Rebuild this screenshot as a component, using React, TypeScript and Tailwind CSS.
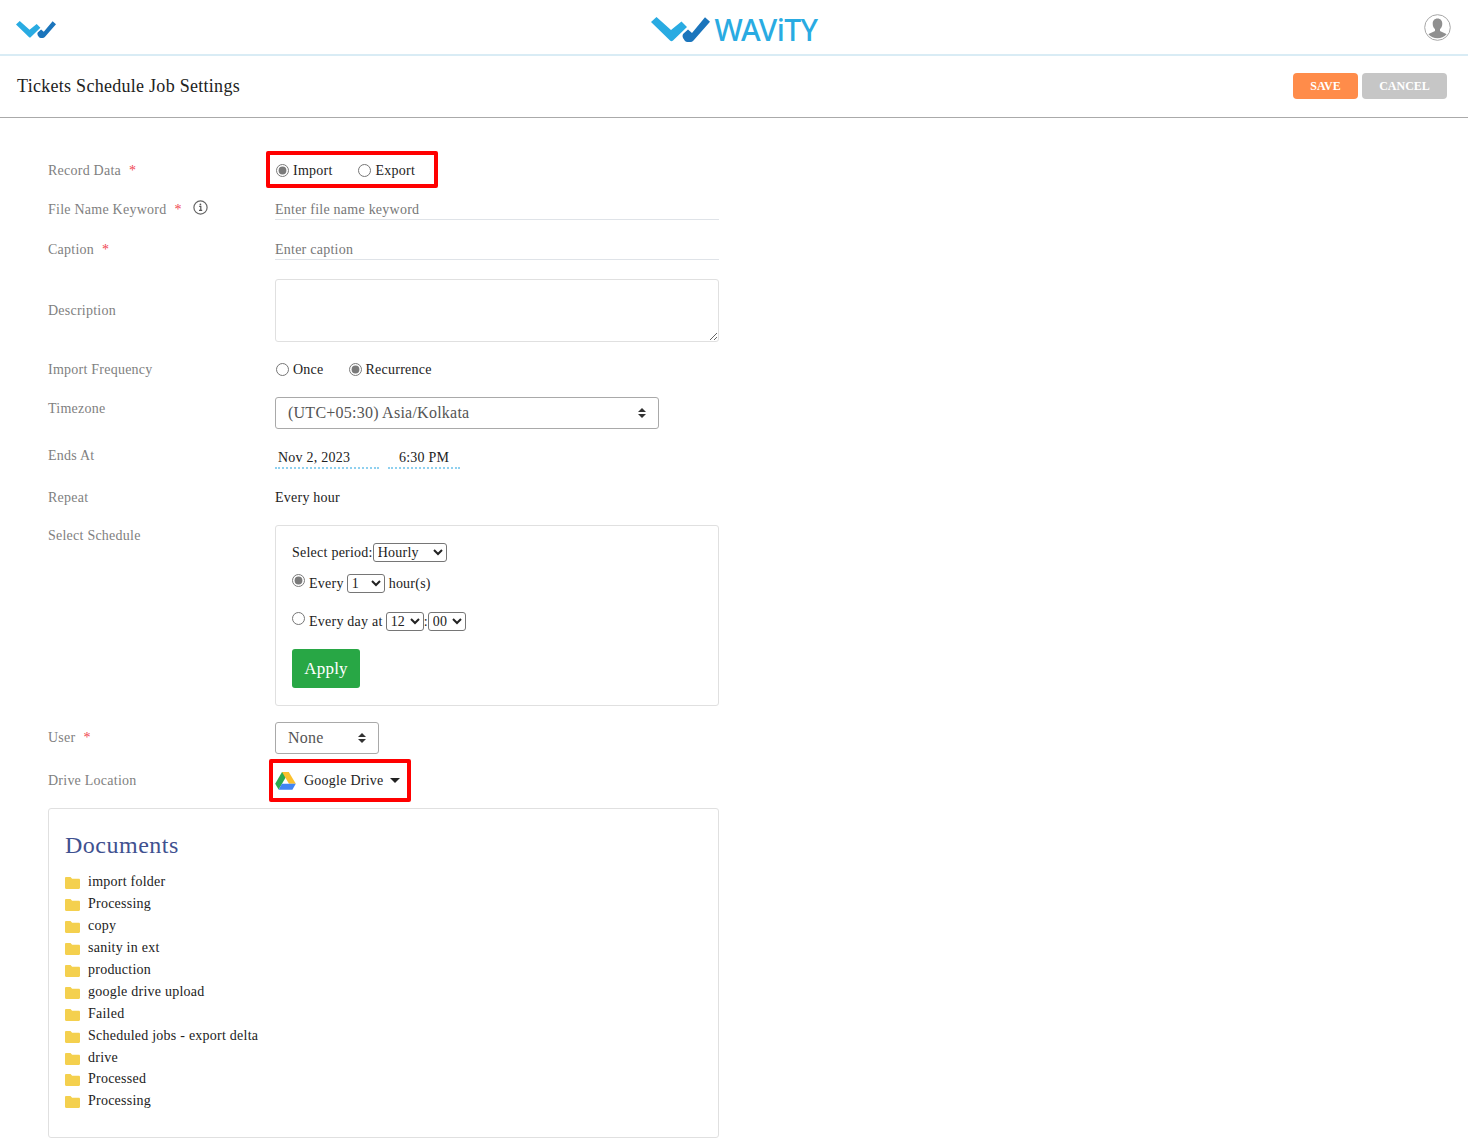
import React from 'react';

const serif = { fontFamily: '"Liberation Serif", serif' };

const LogoMark = ({ className }: { className: string }) => (
  <svg className={className} viewBox="0 0 59 25">
    <path d="M0 5 L5.5 0 L20 13 L30.5 4.5 L36 10 L22 23.5 Q20.5 25 19 23.5 Z" fill="#29abe2" />
    <path d="M32 17 L37 12.5 L41 16 L54 0.3 L59 4.7 L42.5 23.5 Q41 25 39.5 25 L36.5 25 Q35 25 34 24 L32 21 Q31 19 32 17 Z" fill="#1b75bc" />
  </svg>
);

const UserAvatar = () => (
  <svg className="h-[27px] w-[27px]" viewBox="0 0 27 27">
    <circle cx="13.5" cy="13.5" r="12.8" fill="#fff" stroke="#a6a6a6" strokeWidth="1" />
    <path d="M13.5 4.5c3 0 4.8 2.2 4.8 5.2 0 2.4-1 4.4-2.3 5.4v1.6c0 .8 4.8 1.8 6.6 3.6a12.6 12.6 0 0 1-18.2 0c1.8-1.8 6.6-2.8 6.6-3.6v-1.6c-1.3-1-2.3-3-2.3-5.4 0-3 1.8-5.2 4.8-5.2z" fill="#8f8f8f" />
  </svg>
);

const InfoIcon = () => (
  <svg className="h-[15px] w-[15px]" viewBox="0 0 15 15" fill="none">
    <circle cx="7.5" cy="7.5" r="6.6" stroke="#666" strokeWidth="1.2" />
    <path d="M6.2 6.4h1.6v3.7M6 10.4h3.2" stroke="#555" strokeWidth="1.2" />
    <circle cx="7.4" cy="4.3" r="0.9" fill="#555" />
  </svg>
);

const UpDown = () => (
  <svg className="pointer-events-none absolute right-[13px] top-1/2 h-[10px] w-[8px] -translate-y-1/2" viewBox="0 0 8 10" fill="#333">
    <path d="M4 0 L8 4 H0 Z M0 6 H8 L4 10 Z" />
  </svg>
);

const DriveIcon = () => (
  <svg className="h-[18px] w-[21px] shrink-0" viewBox="0 0 21 18">
    <path d="M7 0 H13.8 L7 11.8 L3.6 17.6 L0.2 11.8 Z" fill="#2da94f" />
    <path d="M7 0 H13.8 L20.8 11.8 H14 Z" fill="#fbc02d" />
    <path d="M6.9 11.8 H20.8 L17.4 17.8 H3.5 Z" fill="#4285f4" />
  </svg>
);

const Folder = () => (
  <svg className="h-[12px] w-[15px] shrink-0" viewBox="0 0 15 12" fill="#f4d04e">
    <path d="M1.2 0h4.3l1.6 1.8h6.7c.7 0 1.2.5 1.2 1.2v7.8c0 .7-.5 1.2-1.2 1.2H1.2C.5 12 0 11.5 0 10.8V1.2C0 .5.5 0 1.2 0z" />
  </svg>
);

const Star = () => <span className="ml-[8px] text-[#f0444f]">*</span>;

const Label = ({ children }: { children: React.ReactNode }) => (
  <div className="w-[227px] shrink-0 text-[14px] text-[#7f7f7f]">{children}</div>
);

const Radio = ({ name, checked }: { name: string; checked?: boolean }) => (
  <input type="radio" name={name} defaultChecked={checked} className="m-0 block h-[13px] w-[13px] accent-[#7a7a7a]" />
);

const folders = [
  'import folder',
  'Processing',
  'copy',
  'sanity in ext',
  'production',
  'google drive upload',
  'Failed',
  'Scheduled jobs - export delta',
  'drive',
  'Processed',
  'Processing',
];

export default function App() {
  return (
    <div className="h-[1138px] overflow-hidden bg-white tracking-[0.24px] text-[#333]" style={serif}>
      {/* Top bar */}
      <header className="flex h-[56px] items-center justify-between border-b-2 border-[#d9ecf5] pl-[16px] pr-[17px]">
        <LogoMark className="mt-[5px] h-[17px] w-[40px]" />
        <div className="-ml-[12px] mt-[5px] flex items-center gap-[5px]">
          <LogoMark className="h-[25px] w-[59px]" />
          <span className="text-[30px] font-medium leading-none tracking-[-0.6px] text-[#29abe2]" style={{ fontFamily: '"Noto Sans", sans-serif' }}>WAViTY</span>
        </div>
        <UserAvatar />
      </header>

      {/* Page title */}
      <div className="flex h-[62px] items-center justify-between border-b border-[#aaaaaa] pl-[17px] pr-[21px]">
        <h1 className="text-[18px] font-normal tracking-[0.28px] text-[#222]">Tickets Schedule Job Settings</h1>
        <div className="mb-[2px] flex gap-[4px] tracking-normal">
          <button className="h-[26px] w-[65px] rounded-[4px] bg-[#ff8c4a] text-[12px] font-bold text-white">SAVE</button>
          <button className="h-[26px] w-[85px] rounded-[4px] bg-[#c6c6c6] text-[12px] font-bold text-white">CANCEL</button>
        </div>
      </div>

      <div className="pl-[48px] pt-[33px]">
        {/* Record data */}
        <div className="flex h-[37px] items-center">
          <Label><div className="pt-[1px]">Record Data<Star /></div></Label>
          <div className="-ml-[9px] flex h-[37px] w-[172px] items-center rounded-[2px] border-[4px] border-[#ff0000] pl-[6px] pt-[1px] text-[14px] text-[#222]">
            <Radio name="record" checked />
            <span className="ml-[4px]">Import</span>
            <span className="ml-[25px] flex items-center">
              <Radio name="record" />
              <span className="ml-[5px]">Export</span>
            </span>
          </div>
        </div>

        {/* File name keyword */}
        <div className="mt-[11px] flex h-[21px] items-center">
          <Label>
            <span className="inline-flex items-center">
              File Name Keyword<Star />
              <span className="ml-[11px] -mt-[5px]"><InfoIcon /></span>
            </span>
          </Label>
          <input placeholder="Enter file name keyword" className="h-[21px] w-[444px] border-b border-[#dfe3e8] text-[14px] outline-none placeholder:text-[#777]" />
        </div>

        {/* Caption */}
        <div className="mt-[19px] flex h-[21px] items-center">
          <Label>Caption<Star /></Label>
          <input placeholder="Enter caption" className="h-[21px] w-[444px] border-b border-[#dfe3e8] text-[14px] outline-none placeholder:text-[#777]" />
        </div>

        {/* Description */}
        <div className="mt-[19px] flex h-[63px] items-center">
          <Label>Description</Label>
          <textarea className="h-[63px] w-[444px] rounded-[3px] border border-[#e0e0e0] outline-none" />
        </div>

        {/* Import frequency */}
        <div className="mt-[17px] flex h-[20px] items-center">
          <Label>Import Frequency</Label>
          <div className="flex items-center text-[14px] text-[#222]">
            <span className="ml-px"><Radio name="freq" /></span>
            <span className="ml-[4px]">Once</span>
            <span className="ml-[25px]"><Radio name="freq" checked /></span>
            <span className="ml-[4px]">Recurrence</span>
          </div>
        </div>

        {/* Timezone */}
        <div className="mt-[18px] flex h-[32px]">
          <Label><div className="pt-[1px]">Timezone</div></Label>
          <div className="relative h-[32px] w-[384px]">
            <select className="h-full w-full appearance-none rounded-[3px] border border-[#a9a9a9] bg-white pl-[12px] text-[16px] text-[#555] outline-none">
              <option>(UTC+05:30) Asia/Kolkata</option>
            </select>
            <UpDown />
          </div>
        </div>

        {/* Ends at */}
        <div className="mt-[19px] flex h-[21px]">
          <Label><div className="-mt-[3px]">Ends At</div></Label>
          <div className="flex -mt-[1px] text-[14px] text-[#222]">
            <div className="h-[22px] w-[104px] border-b-2 border-dotted border-[#8fd0ef] pl-[3px]">Nov 2, 2023</div>
            <div className="ml-[9px] h-[22px] w-[72px] border-b-2 border-dotted border-[#8fd0ef] pl-[11px]">6:30 PM</div>
          </div>
        </div>

        {/* Repeat */}
        <div className="mt-[18px] flex h-[20px] items-center">
          <Label>Repeat</Label>
          <div className="text-[14px] text-[#222]">Every hour</div>
        </div>

        {/* Select schedule */}
        <div className="mt-[18px] flex">
          <Label>Select Schedule</Label>
          <div className="h-[181px] w-[444px] rounded-[3px] border border-[#e0e0e0] pl-[16px] pt-[16px] text-[14px] text-[#222]">
            <div className="flex h-[20px] items-center">
              Select period:
              <select className="h-[19px] w-[74px] rounded-[3px] border border-[#767676] bg-white text-[14px]" style={{ appearance: 'auto' }}>
                <option>Hourly</option>
              </select>
            </div>
            <div className="mt-[11px] flex h-[20px] items-center">
              <span className="-mt-[6px]"><Radio name="sched" checked /></span>
              <span className="ml-[4px]">Every</span>
              <select className="ml-[3px] h-[19px] w-[38px] rounded-[3px] border border-[#767676] bg-white text-[14px]" style={{ appearance: 'auto' }}>
                <option>1</option>
              </select>
              <span className="ml-[4px]">hour(s)</span>
            </div>
            <div className="mt-[18px] flex h-[20px] items-center">
              <span className="-mt-[6px]"><Radio name="sched" /></span>
              <span className="ml-[4px]">Every day at</span>
              <select className="ml-[3px] h-[19px] w-[38px] rounded-[3px] border border-[#767676] bg-white text-[14px]" style={{ appearance: 'auto' }}>
                <option>12</option>
              </select>
              :
              <select className="h-[19px] w-[38px] rounded-[3px] border border-[#767676] bg-white text-[14px]" style={{ appearance: 'auto' }}>
                <option>00</option>
              </select>
            </div>
            <button className="mt-[18px] h-[39px] w-[68px] rounded-[3px] bg-[#28a745] text-[17px] text-white">Apply</button>
          </div>
        </div>

        {/* User */}
        <div className="mt-[16px] flex h-[32px] items-center">
          <Label><div className="-mt-[2px]">User<Star /></div></Label>
          <div className="relative h-[32px] w-[104px]">
            <select className="h-full w-full appearance-none rounded-[3px] border border-[#a9a9a9] bg-white pb-[1px] pl-[12px] text-[16px] text-[#555] outline-none">
              <option>None</option>
            </select>
            <UpDown />
          </div>
        </div>

        {/* Drive location */}
        <div className="mt-[5px] flex h-[43px] items-center">
          <Label>Drive Location</Label>
          <div className="-ml-[6px] flex h-[43px] w-[142px] items-center rounded-[2px] border-[4px] border-[#ff0000] pl-[2px] text-[14px] text-[#222]">
            <DriveIcon />
            <span className="ml-[8px]">Google Drive</span>
            <span className="ml-[7px] h-0 w-0 border-x-[5px] border-t-[5px] border-x-transparent border-t-[#222]" />
          </div>
        </div>

        {/* Documents */}
        <div className="mt-[6px] h-[330px] w-[671px] rounded-[3px] border border-[#e0e0e0] pl-[16px] pt-[21px]">
          <h2 className="text-[24px] font-normal leading-[30px] tracking-[0.5px] text-[#3f5190]">Documents</h2>
          <ul className="mt-[11px]">
            {folders.map((name, i) => (
              <li key={i} className="flex h-[21.9px] items-center text-[14px] text-[#222]">
                <span className="mt-[3px]"><Folder /></span>
                <span className="ml-[8px]">{name}</span>
              </li>
            ))}
          </ul>
        </div>
      </div>
    </div>
  );
}
